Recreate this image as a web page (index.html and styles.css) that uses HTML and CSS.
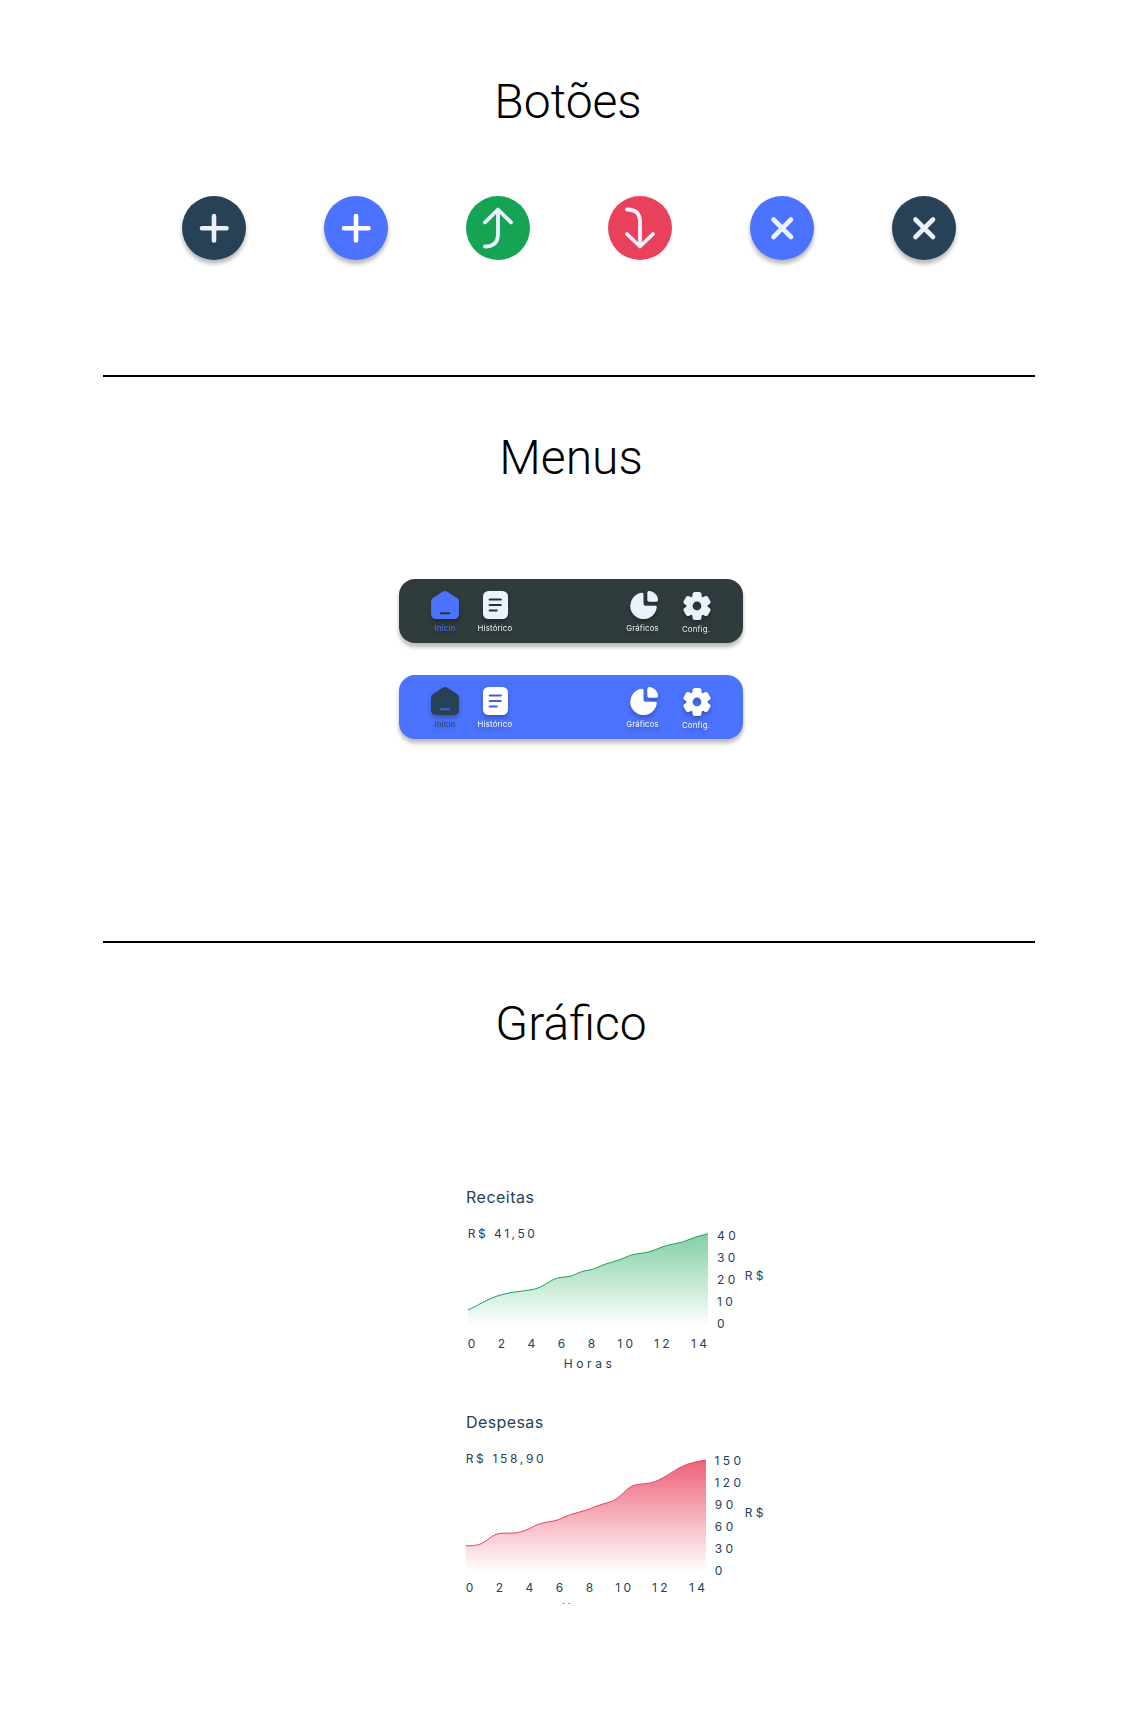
FILE: index.html
```html
<!DOCTYPE html>
<html lang="pt-BR">
<head>
<meta charset="utf-8">
<title>Componentes</title>
<link rel="stylesheet" href="styles.css">
</head>
<body>
<svg class="defs" aria-hidden="true">
  <defs>
    <symbol id="home" viewBox="0 0 28 28">
      <path fill="currentColor" d="M11.2 1C13 -.3 15 -.3 16.8 1L25.6 6.8C27.2 7.9 28 9.2 28 11V22C28 26.2 26.2 28 22 28H6C1.800 28 0 26.200 0 22V11C0 9.200.8 7.900 2.400 6.800Z"/>
      <path class="cut" d="M9.800 22.300H18.200"/>
    </symbol>
    <symbol id="history" viewBox="0 0 25 28">
      <rect width="25" height="28" rx="5.500" fill="currentColor"/>
      <path class="cut" d="M6.700 8.500H17.800M6.700 14H17.800M6.700 19.500H13.700"/>
    </symbol>
    <symbol id="pie" viewBox="0 0 28 28">
      <path fill="currentColor" d="M11.700 1.700Q13.500 1.500 13.500 3.200V12.700Q13.500 14.700 15.500 14.700H25.300Q27 14.700 26.700 16.500A13.300 13.300 0 1 1 11.700 1.700Z"/>
      <path fill="currentColor" d="M17.300 2Q17.300 -.2 19.500 0C24 .5 27.500 4 28 8.500Q28.200 10.700 26 10.700H19.300Q17.300 10.700 17.300 8.700Z"/>
    </symbol>
    <mask id="gear-hole">
      <rect width="28" height="28" fill="#fff"/>
      <circle cx="14" cy="14" r="4.400" fill="#000"/>
    </mask>
    <symbol id="gear" viewBox="0 0 28 28">
      <g fill="currentColor" mask="url(#gear-hole)">
        <circle cx="14" cy="14" r="10.600"/>
        <rect x="9.500" y="0" width="9" height="28" rx="2.500"/>
        <rect x="9.500" y="0" width="9" height="28" rx="2.500" transform="rotate(60 14 14)"/>
        <rect x="9.500" y="0" width="9" height="28" rx="2.500" transform="rotate(120 14 14)"/>
      </g>
    </symbol>
    <linearGradient id="green-fade" x1="0" y1="0" x2="0" y2="1">
      <stop offset="0" stop-color="#14a454" stop-opacity=".53"/>
      <stop offset="1" stop-color="#14a454" stop-opacity="0"/>
    </linearGradient>
    <linearGradient id="red-fade" x1="0" y1="0" x2="0" y2="1">
      <stop offset="0" stop-color="#e9415c" stop-opacity=".83"/>
      <stop offset="1" stop-color="#e9415c" stop-opacity="0"/>
    </linearGradient>
  </defs>
</svg>
<main class="page">
  <section class="section buttons">
    <h2>Botões</h2>
    <div class="button-row">
      <button class="round navy raised" aria-label="Adicionar"><svg viewBox="0 0 64 64"><path class="thick" d="M32 20V44.500M20 32.300H44.500"/></svg></button>
      <button class="round blue raised white" aria-label="Adicionar"><svg viewBox="0 0 64 64"><path class="thick" d="M32 20V44.500M20 32.300H44.500"/></svg></button>
      <button class="round green" aria-label="Receita"><svg viewBox="0 0 64 64"><path d="M19 26.300L32 13.500L45 26.300M32 14V38Q32 50.500 19 50.500"/></svg></button>
      <button class="round red" aria-label="Despesa"><svg viewBox="0 0 64 64"><path d="M19 38L32 50.500L45 38M32 50V26Q32 13.500 19 13.500"/></svg></button>
      <button class="round blue raised" aria-label="Fechar"><svg viewBox="0 0 64 64"><path class="thick" d="M23.500 23.500L41 41M41 23.500L23.500 41"/></svg></button>
      <button class="round navy raised" aria-label="Fechar"><svg viewBox="0 0 64 64"><path class="thick" d="M23.500 23.500L41 41M41 23.500L23.500 41"/></svg></button>
    </div>
  </section>

  <section class="section menus">
    <h2>Menus</h2>
    <nav class="menu menu-dark">
      <a class="item home active"><svg width="28" height="28"><use href="#home"/></svg><span>Início</span></a>
      <a class="item history"><svg width="25" height="28"><use href="#history"/></svg><span>Histórico</span></a>
      <a class="item charts"><svg width="28" height="28"><use href="#pie"/></svg><span>Gráficos</span></a>
      <a class="item config"><svg width="28" height="28"><use href="#gear"/></svg><span>Config.</span></a>
    </nav>
    <nav class="menu menu-blue">
      <a class="item home active"><svg width="28" height="28"><use href="#home"/></svg><span>Início</span></a>
      <a class="item history"><svg width="25" height="28"><use href="#history"/></svg><span>Histórico</span></a>
      <a class="item charts"><svg width="28" height="28"><use href="#pie"/></svg><span>Gráficos</span></a>
      <a class="item config"><svg width="28" height="28"><use href="#gear"/></svg><span>Config.</span></a>
    </nav>
  </section>

  <section class="section graphs">
    <h2>Gráfico</h2>
    <figure class="chart">
      <h3 class="title-income">Receitas</h3>
      <svg class="plot" width="310" height="158" viewBox="0 0 310 158">
        <path fill="url(#green-fade)" d="M2 84C10 80.500 23 72 34 69.200C48 65.300 54 65.700 65.700 63.700C78 61.500 82 55 90.700 52.300C95 51 99 51.300 104 50.300C109 49 111 47 115.700 45.700C120 44.300 124 44.300 128.300 42.700C133 41 136 39 140.700 37.700C146 36 150 35.200 154.700 33.300C160 31.300 163 29.500 167.300 28.500C173 27.300 177 27.300 182.300 26C189 24.300 194 21.300 200.700 19.500C207 17.800 212 17.300 217.300 15.700C222 14.300 226 12 230.700 10.700L242 7.700V100.700H2Z"/>
        <path class="line income" d="M2 84C10 80.500 23 72 34 69.200C48 65.300 54 65.700 65.700 63.700C78 61.500 82 55 90.700 52.300C95 51 99 51.300 104 50.300C109 49 111 47 115.700 45.700C120 44.300 124 44.300 128.300 42.700C133 41 136 39 140.700 37.700C146 36 150 35.200 154.700 33.300C160 31.300 163 29.500 167.300 28.500C173 27.300 177 27.300 182.300 26C189 24.300 194 21.300 200.700 19.500C207 17.800 212 17.300 217.300 15.700C222 14.300 226 12 230.700 10.700L242 7.700"/>
        <text x="1.700" y="12.300" textLength="70.500">R$ 41,50</text>
        <text x="251" y="14.300">40</text><text x="251" y="36.300">30</text><text x="251" y="58.300">20</text><text x="251" y="80.300">10</text><text x="251" y="102.300">0</text>
        <text x="278.700" y="54">R$</text>
        <text x="1.700" y="122.300">0</text><text x="31.700" y="122.300">2</text><text x="61.500" y="122.300">4</text><text x="91.700" y="122.300">6</text><text x="121.700" y="122.300">8</text><text x="151.300" y="122.300">10</text><text x="188" y="122.300">12</text><text x="225" y="122.300">14</text>
        <text x="97.700" y="142.300" textLength="51.500">Horas</text>
      </svg>
    </figure>
    <figure class="chart chart-expense">
      <h3 class="title-expense">Despesas</h3>
      <svg class="plot" width="310" height="158" viewBox="0 0 310 158">
        <path fill="url(#red-fade)" d="M0 99.700C5 99.700 12 100 17.300 96.500C24 92.500 27 88.500 33.300 87.500C38 86.700 44 87.600 49 87C59 86 66 80.500 72.300 78.300C79 75.800 86 76 92.300 73.700C97 72 101 69.500 105.700 68.300C111 66.500 116 65.600 120.700 64C126 62 129 60.500 134 59C139 57 144 56.300 147.300 54.700C155 51 160 42.500 167 39.700C173 37.500 179 38.300 184 37C196 34.500 206 25.300 215.700 20.700C224 16.700 231 15.500 240 14V125.700H0Z"/>
        <path class="line expense" d="M0 99.700C5 99.700 12 100 17.300 96.500C24 92.500 27 88.500 33.300 87.500C38 86.700 44 87.600 49 87C59 86 66 80.500 72.300 78.300C79 75.800 86 76 92.300 73.700C97 72 101 69.500 105.700 68.300C111 66.500 116 65.600 120.700 64C126 62 129 60.500 134 59C139 57 144 56.300 147.300 54.700C155 51 160 42.500 167 39.700C173 37.500 179 38.300 184 37C196 34.500 206 25.300 215.700 20.700C224 16.700 231 15.500 240 14"/>
        <text x="-.3" y="17.300" textLength="81.300">R$ 158,90</text>
        <text x="248.500" y="19.300">150</text><text x="248.500" y="41.300">120</text><text x="248.800" y="63.300">90</text><text x="248.800" y="85.300">60</text><text x="248.800" y="107.300">30</text><text x="248.800" y="129.300">0</text>
        <text x="278.700" y="70.700">R$</text>
        <text x="-.3" y="146.300">0</text><text x="29.700" y="146.300">2</text><text x="59.500" y="146.300">4</text><text x="89.700" y="146.300">6</text><text x="119.700" y="146.300">8</text><text x="149.300" y="146.300">10</text><text x="186" y="146.300">12</text><text x="223" y="146.300">14</text>
        <text x="95.700" y="166.300" textLength="51.500">Horas</text>
      </svg>
    </figure>
  </section>
</main>
</body>
</html>
```
FILE: styles.css
```css
* { box-sizing: border-box; }
body { margin: 0; background: #fff; font-family: Inter, sans-serif; }
.defs { display: block; width: 0; height: 0; }
.page { width: 1138px; height: 1721px; padding: 0 103px; overflow: hidden; }

.section { display: flex; flex-direction: column; align-items: center; }
.buttons { height: 377px; padding-top: 74px; border-bottom: 2px solid #000; }
.menus { height: 566px; padding-top: 53px; border-bottom: 2px solid #000; }
.graphs { padding-top: 53px; }
h2 { margin: 0; padding-right: 2px; font: 300 48px/56px Roboto, sans-serif; color: #000; }
.menus h2, .graphs h2 { padding: 0 0 0 4px; }

.button-row { display: flex; gap: 78px; margin-top: 66px; }
.round { width: 64px; height: 64px; padding: 0; border: 0; border-radius: 50%; color: #ebf2fc; }
.round svg { display: block; width: 64px; height: 64px; }
.round path { fill: none; stroke: currentColor; stroke-width: 3.8; stroke-linecap: round; stroke-linejoin: round; }
.round .thick { stroke-width: 4.6; }
.raised { box-shadow: 0 4px 4px rgba(0, 0, 0, .28); }
.navy { background: #274157; }
.blue { background: #4b73ff; }
.green { background: #14a454; }
.red { background: #e9415c; }
.white { color: #fff; }

.menu { display: flex; align-items: flex-start; width: 344px; height: 64px; margin: 93px 0 0 4px; padding: 12px 0 0 26px; border-radius: 16px; box-shadow: 0 4px 4px rgba(0, 0, 0, .28); }
.menu + .menu { margin-top: 32px; }
.menu-dark { --cut: #26322f; background: #2f3b3c; color: #ebf2fc; }
.menu-blue { --cut: #4061d8; background: #4b73ff; color: #fff; }
.item { display: flex; flex-direction: column; align-items: center; width: 40px; font-size: 7.8px; line-height: 10px; letter-spacing: .2px; filter: drop-shadow(0 3px 2px rgba(0, 0, 0, .25)); }
.item svg { display: block; flex: none; margin-bottom: 4px; }
.item.history { margin-left: 10px; }
.item.charts { margin-left: 109px; }
.item.config { margin: 1px 0 0 13px; }
.charts span { margin-left: -3px; }
.config span { margin-left: -2px; }
.menu-dark .active { color: #4b73ff; }
.menu-blue .active { color: #274157; }
.cut { fill: none; stroke: var(--cut); stroke-width: 2.1; stroke-linecap: round; }

.chart { width: 310px; height: 225px; margin: 0; color: #274157; }
.chart:first-of-type { margin-top: 133px; }
.graphs .chart { margin-left: 104px; }
h3 { height: 41px; margin: 0; font-size: 16px; font-weight: 400; line-height: 24px; }
.chart-expense h3 { height: 36px; }
.title-income { letter-spacing: .5px; }
.title-expense { letter-spacing: .4px; }
.plot { display: block; overflow: hidden; }
.plot text { fill: #274157; font-size: 12px; letter-spacing: 3.4px; }
.line { fill: none; stroke-width: 1; }
.income { stroke: #14a454; }
.expense { stroke: #e9415c; }
```
